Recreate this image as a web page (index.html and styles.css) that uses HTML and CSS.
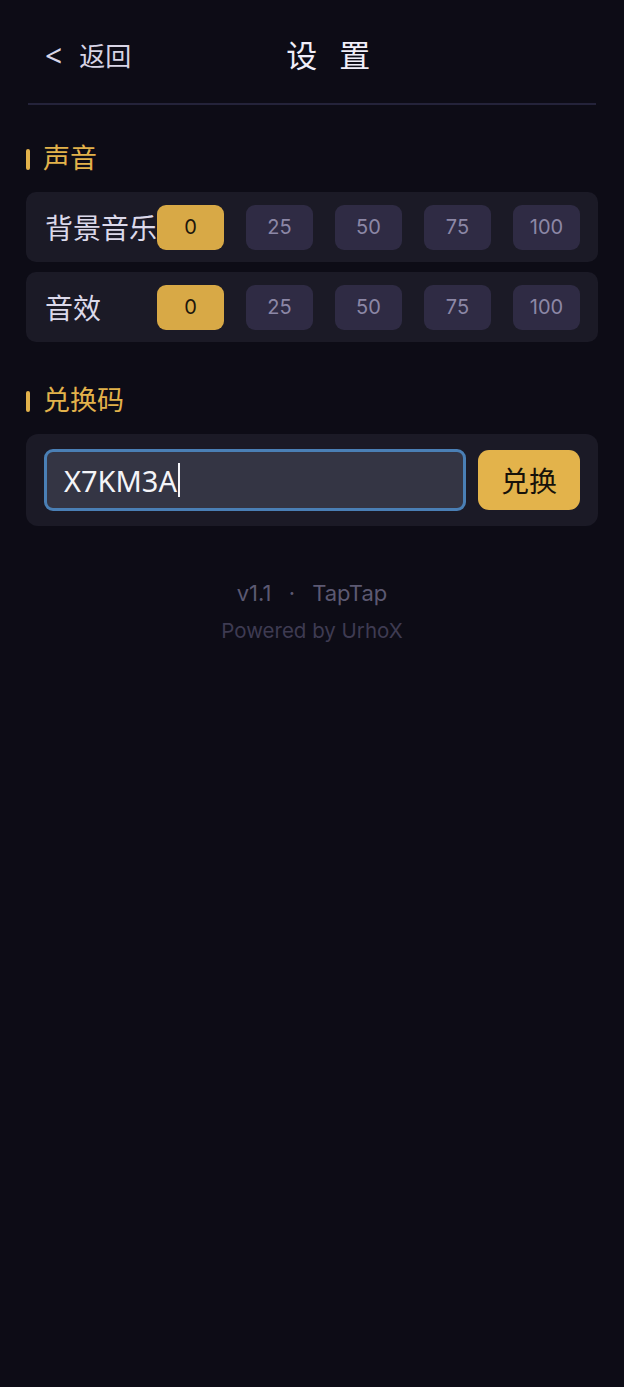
FILE: index.html
```html
<!DOCTYPE html>
<html lang="zh-CN">
<head>
  <meta charset="UTF-8" />
  <meta name="viewport" content="width=device-width, initial-scale=1.0"/>
  <title>设置</title>
  <link rel="stylesheet" href="styles.css">
</head>
<body>

  <header class="topo">
    <a class="voltar" href="#"><span class="seta">&lt;</span>返回</a>
    <h1 class="titulo">设 置</h1>
  </header>

  <main class="conteudo">
    <h2 class="secao">声音</h2>

    <div class="linha">
      <span class="rotulo">背景音乐</span>
      <div class="opcoes">
        <button class="opcao ativa">0</button>
        <button class="opcao">25</button>
        <button class="opcao">50</button>
        <button class="opcao">75</button>
        <button class="opcao">100</button>
      </div>
    </div>

    <div class="linha">
      <span class="rotulo">音效</span>
      <div class="opcoes">
        <button class="opcao ativa">0</button>
        <button class="opcao">25</button>
        <button class="opcao">50</button>
        <button class="opcao">75</button>
        <button class="opcao">100</button>
      </div>
    </div>

    <h2 class="secao secao-codigo">兑换码</h2>

    <div class="resgate">
      <div class="campo"><span>X7KM3A</span><i class="cursor"></i></div>
      <button class="botao-resgate">兑换</button>
    </div>

    <footer class="rodape">
      <div class="versao">v1.1 <span class="ponto">·</span> TapTap</div>
      <div class="powered">Powered by UrhoX</div>
    </footer>
  </main>

</body>
</html>
```

FILE: styles.css
```css
body {
  font-family: Inter, "Noto Sans CJK SC", sans-serif;
  background-color: #0d0c16;
  color: #e6e4f0;
  margin: 0;
  padding: 0;
}

.topo {
  position: relative;
  height: 105px;
  margin: 0 28px;
  border-bottom: 2px solid #24233a;
  display: flex;
  align-items: center;
  justify-content: center;
  box-sizing: border-box;
}

.voltar {
  position: absolute;
  left: 17px;
  top: 35px;
  height: 38px;
  color: #d8d5e6;
  text-decoration: none;
  font-family: "Noto Sans CJK SC", sans-serif;
  font-size: 26px;
  display: flex;
  align-items: center;
}

.seta {
  font-family: "Noto Sans", sans-serif;
  font-size: 30px;
  font-weight: 400;
  margin-right: 17px;
  margin-top: 2px;
}

.titulo {
  margin: 0;
  margin-top: 4px;
  font-family: "Noto Sans CJK SC", sans-serif;
  font-size: 31px;
  font-weight: 400;
  letter-spacing: 7.5px;
  padding-left: 40px;
  color: #f0eef8;
}

.conteudo {
  padding: 0 26px;
}

.secao {
  margin: 36px 0 15px;
  font-size: 27px;
  font-weight: 400;
  color: #e2b24b;
  display: flex;
  align-items: center;
  line-height: 36px;
}

.secao-codigo {
  margin-top: 41px;
}

.secao::before {
  content: "";
  width: 4px;
  height: 21px;
  background-color: #e2b24b;
  border-radius: 2px;
  margin-right: 13px;
}

.linha {
  background-color: #1b1a26;
  border-radius: 10px;
  height: 70px;
  padding: 0 18px 0 19px;
  display: flex;
  align-items: center;
  margin-bottom: 10px;
}

.rotulo {
  width: 112px;
  flex-shrink: 0;
  font-size: 28px;
  white-space: nowrap;
  color: #dcd9ea;
}

.opcoes {
  flex: 1;
  display: flex;
  justify-content: space-between;
}

.opcao {
  width: 67px;
  height: 45px;
  border: none;
  border-radius: 9px;
  background-color: #2f2b44;
  color: #8c87a6;
  font-family: Inter, sans-serif;
  font-size: 20px;
  padding: 0;
}

.opcao.ativa {
  background-color: #d8a946;
  color: #1c160c;
}

.resgate {
  background-color: #1b1a26;
  border-radius: 12px;
  padding: 15px 18px;
  display: flex;
  align-items: center;
  gap: 12px;
}

.campo {
  flex: 1;
  height: 62px;
  box-sizing: border-box;
  border: 3px solid #4a7fb5;
  border-radius: 9px;
  background-color: #343544;
  display: flex;
  align-items: center;
  padding-left: 17px;
  font-family: "Noto Sans", sans-serif;
  font-size: 29px;
  color: #f4f4f8;
}

.cursor {
  width: 2px;
  height: 34px;
  background-color: #f4f4f8;
  margin-left: 1px;
}

.botao-resgate {
  width: 102px;
  height: 60px;
  border: none;
  border-radius: 11px;
  background-color: #e3b34b;
  color: #17120a;
  font-family: "Noto Sans CJK SC", sans-serif;
  font-size: 28px;
  padding: 0;
}

.rodape {
  text-align: center;
  margin-top: 54px;
}

.versao {
  font-size: 22px;
  color: #5c5972;
  word-spacing: 7px;
}

.ponto {
  margin: 0 4px;
}

.powered {
  margin-top: 12px;
  font-size: 20.5px;
  color: #3e3b52;
}
```
